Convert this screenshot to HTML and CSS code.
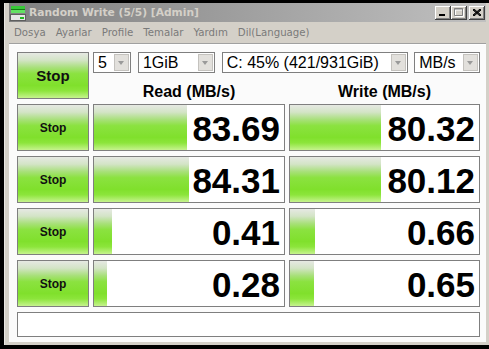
FILE: index.html
```html
<!DOCTYPE html>
<html lang="tr">
  <head>
    <meta charset="UTF-8">
    <title>Random Write (5/5) [Admin]</title>
    <link rel="stylesheet" href="styles.css">
  </head>
  <body>
    <div class="window">
      <div class="titlebar">
        <svg class="app-icon" width="16" height="16" viewBox="0 0 16 16">
          <rect x="1" y="1" width="14" height="3" fill="#38c838"/>
          <rect x="1" y="4" width="14" height="1" fill="#157a15"/>
          <rect x="1" y="5" width="14" height="3" fill="#62e062"/>
          <rect x="0.5" y="9.5" width="15" height="6" fill="#e6e6e6" stroke="#5e5e5e"/>
          <rect x="10" y="12" width="4" height="2" fill="#22b822"/>
        </svg>
        <span class="title">Random Write (5/5) [Admin]</span>
        <div class="caption-buttons">
          <span class="cap-btn">
            <svg width="8" height="7" viewBox="0 0 8 7"><rect x="0" y="5" width="6" height="2" fill="#000"/></svg>
          </span>
          <span class="cap-btn">
            <svg width="10" height="9" viewBox="0 0 10 9">
              <path d="M1.5 1.5h8v7h-8z M1 2h9" stroke="#fff" fill="none"/>
              <path d="M0.5 0.5h8v7h-8z M0 1h9" stroke="#808080" fill="none"/>
            </svg>
          </span>
          <span class="cap-btn close">
            <svg width="8" height="7" viewBox="0 0 8 7"><path d="M0 0l8 7M1 0l7 6M0 1l7 6M8 0l-8 7M7 0l-7 6M8 1l-7 6" stroke="#000" stroke-width="1"/></svg>
          </span>
        </div>
      </div>

      <div class="menubar">
        <span>Dosya</span>
        <span>Ayarlar</span>
        <span>Profile</span>
        <span>Temalar</span>
        <span>Yardım</span>
        <span>Dil(Language)</span>
      </div>

      <div class="client">
        <div class="grid">
          <button class="stop big">Stop</button>
          <div class="controls">
            <div class="combos">
              <div class="combo count"><span class="combo-text">5</span><span class="combo-arrow"></span></div>
              <div class="combo size"><span class="combo-text">1GiB</span><span class="combo-arrow"></span></div>
              <div class="combo drive"><span class="combo-text">C: 45% (421/931GiB)</span><span class="combo-arrow"></span></div>
              <div class="combo unit"><span class="combo-text">MB/s</span><span class="combo-arrow"></span></div>
            </div>
            <div class="head">Read (MB/s)</div>
            <div class="head">Write (MB/s)</div>
          </div>

          <button class="stop">Stop</button>
          <div class="val" style="--w: 93px">83.69</div>
          <div class="val" style="--w: 91px">80.32</div>

          <button class="stop">Stop</button>
          <div class="val" style="--w: 95px">84.31</div>
          <div class="val" style="--w: 91px">80.12</div>

          <button class="stop">Stop</button>
          <div class="val" style="--w: 18px">0.41</div>
          <div class="val" style="--w: 25px">0.66</div>

          <button class="stop">Stop</button>
          <div class="val" style="--w: 13px">0.28</div>
          <div class="val" style="--w: 24px">0.65</div>
        </div>
        <div class="status"></div>
      </div>
    </div>
  </body>
</html>
```

FILE: styles.css
```css
body {
  margin: 0;
  background: #000;
  font-family: "Liberation Sans", Arial, sans-serif;
}

.window {
  box-sizing: border-box;
  width: 485px;
  height: 342px;
  margin: 3px 0 0 4px;
  padding: 0 3px 3px 4px;
  background: #d4d0c8;
  border-left: 1px solid #e8e6e2;
  display: flex;
  flex-direction: column;
}

.titlebar {
  height: 19px;
  display: flex;
  align-items: center;
  background: linear-gradient(to right, #808080, #c0c0c0);
  padding-left: 1px;
}

.app-icon {
  margin-right: 3px;
}

.title {
  color: #d4d0c8;
  font-family: "DejaVu Sans", Verdana, sans-serif;
  font-weight: bold;
  font-size: 10.7px;
}

.caption-buttons {
  margin-left: auto;
  margin-right: 1px;
  display: flex;
}

.cap-btn {
  width: 16px;
  height: 14px;
  background: #d4d0c8;
  box-shadow: inset -1px -1px #404040, inset 1px 1px #fff, inset -2px -2px #808080;
  display: flex;
  align-items: center;
  justify-content: center;
}

.cap-btn.close {
  margin-left: 2px;
}

.menubar {
  height: 21px;
  display: flex;
  align-items: center;
  font-family: "DejaVu Sans", Verdana, sans-serif;
  font-size: 10.2px;
  color: #7a7a7a;
  border-bottom: 1px solid #a0a0a0;
}

.menubar span {
  padding: 0 5px;
}

.client {
  flex: 1;
  background: #fbfbfb;
  border-top: 1px solid #fff;
  padding: 7px 7px 0 8px;
}

.grid {
  display: grid;
  grid-template-columns: 72px 192px 191px;
  grid-auto-rows: 47px;
  column-gap: 4px;
  row-gap: 5px;
}

.stop,
.val {
  --bar: linear-gradient(#e6e9e3 0%, #d3e4c6 16%, #a9e07c 32%, #8be240 46%, #80e02c 72%, #8ce53b 84%, #c6f38e 100%);
}

.stop {
  margin: 0;
  padding: 0;
  border: 1px solid #7f7f7f;
  background: var(--bar);
  font-family: "Liberation Sans", Arial, sans-serif;
  font-weight: bold;
  font-size: 12px;
  color: #111;
}

.stop.big {
  font-size: 15px;
}

.controls {
  grid-column: span 2;
  display: grid;
  grid-template-columns: 192px 191px;
  grid-template-rows: 21px 1fr;
  column-gap: 4px;
}

.combos {
  grid-column: 1 / -1;
  display: flex;
  gap: 7px;
}

.combo {
  box-sizing: border-box;
  height: 21px;
  border: 1px solid #7f7f7f;
  background: #fff;
  display: flex;
  align-items: center;
  padding: 0 1px 0 4px;
  font-size: 16px;
  color: #000;
}

.combo.count { width: 38px; }
.combo.size { width: 77px; }
.combo.drive { width: 187px; margin-right: -1px; }
.combo.unit { width: 66px; }

.combo-text {
  flex: 1;
  white-space: nowrap;
}

.combo-arrow {
  box-sizing: border-box;
  width: 15px;
  height: 17px;
  background: #e2e0dc;
  border: 1px solid #c4c2be;
  position: relative;
}

.combo-arrow::after {
  content: "";
  position: absolute;
  left: 3px;
  top: 6px;
  border-left: 3.5px solid transparent;
  border-right: 3.5px solid transparent;
  border-top: 4px solid #9a9a9a;
}

.head {
  align-self: end;
  text-align: center;
  font-weight: bold;
  font-size: 16px;
  line-height: 14px;
}

.val {
  box-sizing: border-box;
  border: 1px solid #7f7f7f;
  background-color: #fff;
  background-image: var(--bar);
  background-repeat: no-repeat;
  background-size: var(--w) 100%;
  display: flex;
  align-items: center;
  justify-content: flex-end;
  padding: 3px 4px 0 0;
  font-weight: bold;
  font-size: 35px;
  color: #000;
}

.status {
  height: 25px;
  margin-top: 5px;
  width: 463px;
  box-sizing: border-box;
  border: 1px solid #7f7f7f;
  background: #fff;
}
```
